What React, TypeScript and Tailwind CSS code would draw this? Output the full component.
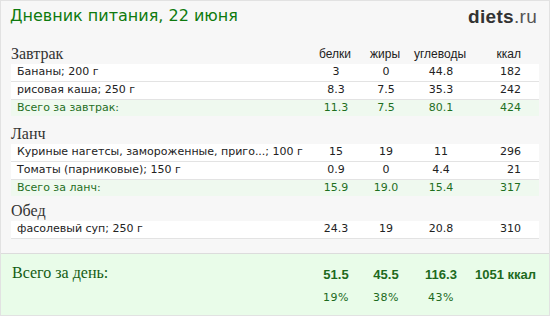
import React from 'react';

type Row = { name: string; p: string; f: string; c: string; k: string };

const meals: { title: string; rows: Row[]; total?: Row; head?: boolean; gap: string }[] = [
  {
    title: 'Завтрак',
    head: true,
    gap: 'mb-[8px]',
    rows: [
      { name: 'Бананы; 200 г', p: '3', f: '0', c: '44.8', k: '182' },
      { name: 'рисовая каша; 250 г', p: '8.3', f: '7.5', c: '35.3', k: '242' },
    ],
    total: { name: 'Всего за завтрак:', p: '11.3', f: '7.5', c: '80.1', k: '424' },
  },
  {
    title: 'Ланч',
    gap: 'mb-[5px]',
    rows: [
      { name: 'Куриные нагетсы, замороженные, приго...; 100 г', p: '15', f: '19', c: '11', k: '296' },
      { name: 'Томаты (парниковые); 150 г', p: '0.9', f: '0', c: '4.4', k: '21' },
    ],
    total: { name: 'Всего за ланч:', p: '15.9', f: '19.0', c: '15.4', k: '317' },
  },
  {
    title: 'Обед',
    gap: 'mb-0',
    rows: [{ name: 'фасолевый суп; 250 г', p: '24.3', f: '19', c: '20.8', k: '310' }],
  },
];

const grid = 'grid grid-cols-[300px_50px_50px_60px_67px]';

const FoodRow = ({ row, total }: { row: Row; total?: boolean }) => (
  <div
    className={`${grid} items-center text-[11px] ${
      total ? 'h-[16px] bg-[#eff9ef] text-[#1f6f1f]' : 'h-[18px] bg-white text-[#222] border-b border-[#e3e3e3]'
    }`}
  >
    <span className="pl-[6px] whitespace-nowrap">{row.name}</span>
    <span className="text-center">{row.p}</span>
    <span className="text-center">{row.f}</span>
    <span className="text-center">{row.c}</span>
    <span className="text-right pr-[17px]">{row.k}</span>
  </div>
);

const head = "font-['Liberation_Sans',sans-serif] text-[12px] text-[#222]";
const big = "font-['Liberation_Sans',sans-serif] font-bold text-[13px] leading-[20px] text-[#1d6a1d]";
const pct = 'text-center text-[11px] leading-[20px] text-[#1d6a1d] tracking-[0.5px] pt-[3px]';

export default function App() {
  return (
    <div className="w-[550px] h-[316px] bg-[#f7f7f7] border border-[#e2e2e2] flex flex-col font-['DejaVu_Sans',sans-serif] overflow-hidden">
      <div className="shrink-0 flex items-start justify-between pl-[9px] pr-[12px] pt-[5px] h-[43px]">
        <span className="text-[16px] leading-[20px] text-[#0e7a0e]">Дневник питания, 22 июня</span>
        <span className="font-['Liberation_Sans',sans-serif] text-[19px] leading-[22px] tracking-[0.3px] text-[#333]">
          <b>diets</b>
          <span className="text-[#555]">.ru</span>
        </span>
      </div>

      {meals.map(m => (
        <div key={m.title} className={`shrink-0 ${m.gap}`}>
          <div className={`${grid} mx-[9px] h-[20px] items-center`}>
            <span className="pl-[1px] font-['Liberation_Serif',serif] text-[16px] leading-[20px] text-[#333]">{m.title}</span>
            {m.head && (
              <>
                <span className={`text-center ${head}`}>белки</span>
                <span className={`text-center ${head}`}>жиры</span>
                <span className={`text-center ${head}`}>углеводы</span>
                <span className={`text-right pr-[16px] ${head}`}>ккал</span>
              </>
            )}
          </div>
          <div className="mx-[10px]">
            {m.rows.map(r => (
              <FoodRow key={r.name} row={r} />
            ))}
            {m.total && <FoodRow row={m.total} total />}
          </div>
        </div>
      ))}

      <div className="shrink-0 mt-auto h-[62px] bg-[#e9fce9] border-t border-[#dcdcdc]">
        <div className={`${grid} mx-[10px] pt-[11px]`}>
          <span className="font-['Liberation_Serif',serif] text-[16px] leading-[16px] text-[#135c13] pl-[1px]">Всего за день:</span>
          <span className={`text-center ${big}`}>51.5</span>
          <span className={`text-center ${big}`}>45.5</span>
          <span className={`text-center ${big}`}>116.3</span>
          <span className={`text-right pr-[2px] ${big}`}>1051 ккал</span>
          <span />
          <span className={pct}>19%</span>
          <span className={pct}>38%</span>
          <span className={pct}>43%</span>
          <span />
        </div>
      </div>
    </div>
  );
}
